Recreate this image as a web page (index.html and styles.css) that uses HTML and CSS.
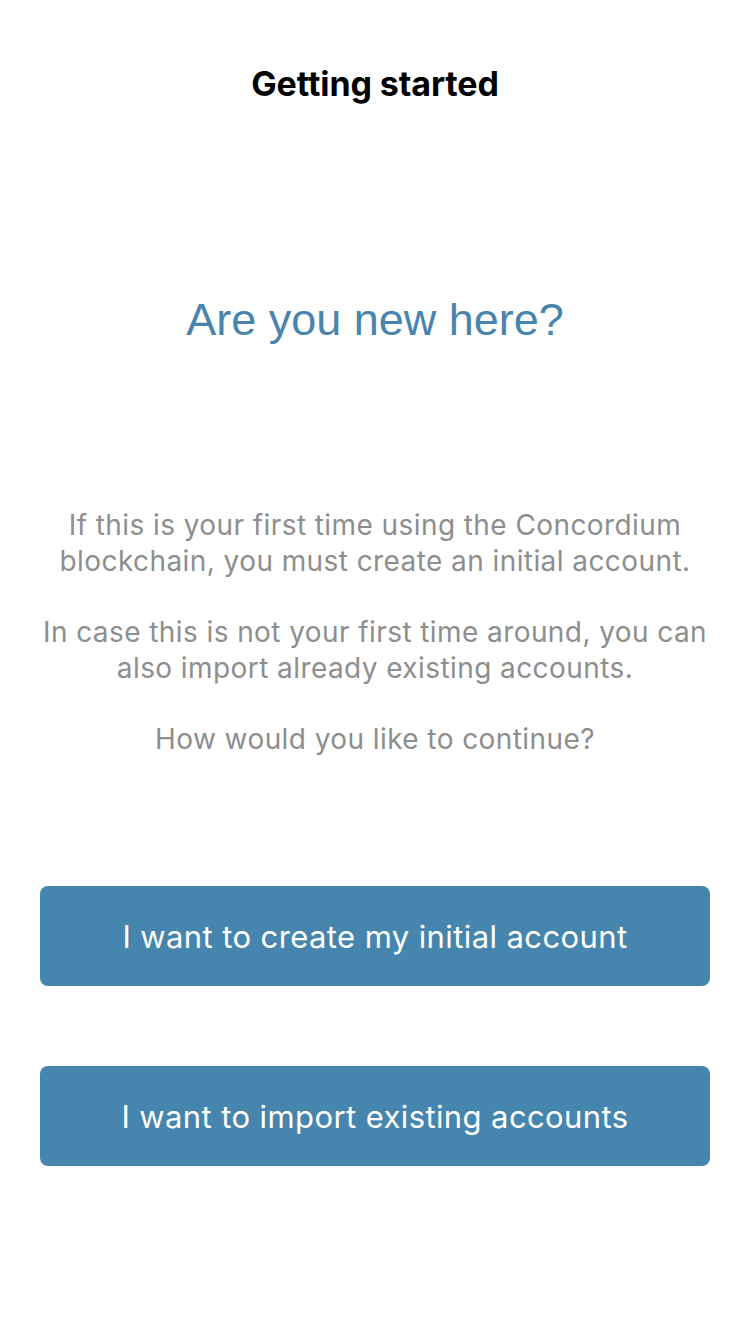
FILE: index.html
```html
<!DOCTYPE html>
<html lang="en">
<head>
<meta charset="utf-8">
<title>Getting started</title>
<link rel="stylesheet" href="styles.css">
</head>
<body>
<main class="screen">
  <header class="nav">
    <h2 class="nav-title">Getting started</h2>
  </header>
  <h1 class="headline">Are you new here?</h1>
  <section class="intro">
    <p>If this is your first time using the Concordium<br>blockchain, you must create an initial account.</p>
    <p>In case this is not your first time around, you can<br>also import already existing accounts.</p>
    <p>How would you like to continue?</p>
  </section>
  <div class="actions">
    <button class="btn">I want to create my initial account</button>
    <button class="btn">I want to import existing accounts</button>
  </div>
</main>
</body>
</html>
```
FILE: styles.css
```css
html, body {
  margin: 0;
  padding: 0;
  background: #ffffff;
}
body {
  font-family: "Inter", "Liberation Sans", sans-serif;
  width: 750px;
  height: 1334px;
}
.screen {
  display: flex;
  flex-direction: column;
  align-items: stretch;
}
.nav {
  padding-top: 64px;
  display: flex;
  justify-content: center;
}
.nav-title {
  margin: 0;
  font-size: 34px;
  line-height: 40px;
  font-weight: 700;
  color: #000000;
  letter-spacing: -0.1px;
}
.headline {
  margin: 186px 0 0;
  text-align: center;
  font-family: "Liberation Sans", Arial, sans-serif;
  font-weight: 400;
  font-size: 45px;
  line-height: 60px;
  color: #4884ac;
}
.intro {
  margin-top: 157px;
  display: flex;
  flex-direction: column;
  gap: 35px;
}
.intro p {
  margin: 0;
  text-align: center;
  font-family: "Inter", "Liberation Sans", sans-serif;
  font-size: 28px;
  line-height: 36px;
  letter-spacing: 0.42px;
  color: #8e8e8e;
}
.actions {
  margin-top: 129px;
  padding: 0 40px;
  display: flex;
  flex-direction: column;
  gap: 80px;
}
.btn {
  height: 100px;
  border: none;
  border-radius: 8px;
  background: #4685ad;
  color: #ffffff;
  font-family: "Inter", "Liberation Sans", sans-serif;
  font-size: 31px;
  letter-spacing: 0.4px;
  padding: 0;
}
```
